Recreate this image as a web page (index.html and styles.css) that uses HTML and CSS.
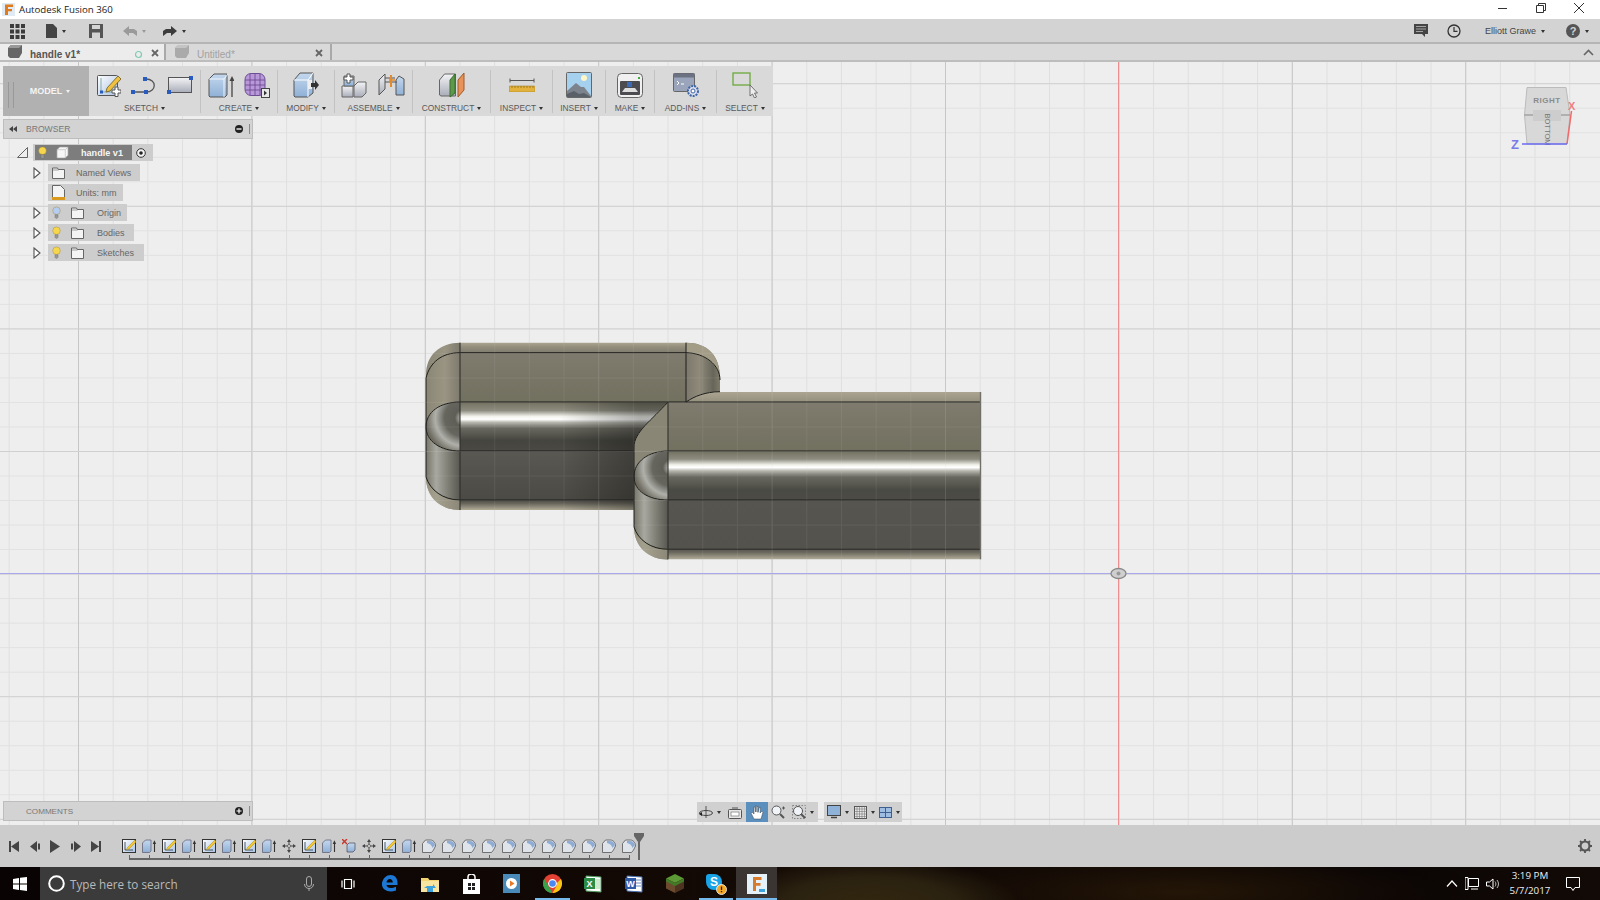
FILE: index.html
```html
<!DOCTYPE html>
<html lang="en">
<head>
<meta charset="utf-8">
<title>Autodesk Fusion 360</title>
<link rel="stylesheet" href="styles.css">
</head>
<body>
<svg class="defs" width="0" height="0" aria-hidden="true">
  <defs>
    <linearGradient id="gBlue" x1="0" y1="0" x2="0" y2="1"><stop offset="0" stop-color="#c4d8ee"/><stop offset="1" stop-color="#8fb0d6"/></linearGradient>
    <linearGradient id="gGrey" x1="0" y1="0" x2="0" y2="1"><stop offset="0" stop-color="#f4f4f6"/><stop offset="1" stop-color="#a9adb8"/></linearGradient>
    <linearGradient id="gPaper" x1="0" y1="0" x2="1" y2="1"><stop offset="0" stop-color="#fff"/><stop offset="1" stop-color="#a9c2e2"/></linearGradient>

    <symbol id="i-sketch" viewBox="0 0 24 24"><rect x=".5" y="2.5" width="20" height="20" rx="1" fill="url(#gPaper)" stroke="#555"/><path d="M4 5v14h14" fill="none" stroke="#8aa" /><rect x="3" y="17.500" width="3" height="3" fill="#2a5cc0"/><path d="M10 15l11-12 3 3-11 12-4 1z" fill="#f0c040" stroke="#6a5a20" stroke-width=".8"/><path d="M15 17h3v-3h3v3h3v3h-3v3.500h-3V20h-3z" fill="#fff" stroke="#555"/></symbol>
    <symbol id="i-spline" viewBox="0 0 26 18"><path d="M2 16h13c11 0 11-13 0-13h-1" fill="none" stroke="#555" stroke-width="1.300"/><rect y="14" width="4" height="4" fill="#2a5cc0"/><rect x="13" y="14" width="4" height="4" fill="#2a5cc0"/><rect x="12" y="1" width="4" height="4" fill="#2a5cc0"/></symbol>
    <symbol id="i-rect" viewBox="0 0 26 18"><rect x="1.500" y="1.500" width="23" height="15" fill="url(#gGrey)" stroke="#555"/><rect x="22" width="4" height="4" fill="#2a5cc0"/><rect y="14" width="4" height="4" fill="#2a5cc0"/></symbol>
    <symbol id="i-extrude" viewBox="0 0 26 26"><path d="M1 7l5-5h13v21l-2 2H2l-1-1z" fill="url(#gBlue)" stroke="#555"/><path d="M1 7h15v18M16 7l4-5" fill="none" stroke="#fff" stroke-opacity=".8"/><path d="M24 25V7" stroke="#444" stroke-width="1.300"/><path d="M21.500 9L24 4l2.500 5z" fill="#444"/></symbol>
    <symbol id="i-mesh" viewBox="0 0 26 26"><rect x="1" y="1.500" width="20" height="22" rx="6" fill="#b898d8" stroke="#6d4d94"/><path d="M1 8h20M1 13h20M1 18h20M6 2v21M11 2v21M16 2v21" stroke="#6d4d94" stroke-width=".9"/><rect x="17.500" y="16.500" width="8" height="9" fill="#e8e8e8" stroke="#444"/><path d="M20 18.500l3 2.500-3 2.500z" fill="#333"/></symbol>
    <symbol id="i-modify" viewBox="0 0 26 26"><path d="M1 8l6-7h13v20l-5 4H2l-1-1z" fill="url(#gBlue)" stroke="#555"/><path d="M15 25V8H1M15 8l5-7" fill="none" stroke="#fff"/><path d="M15 8h4v9h-4z" fill="#eee"/><path d="M18 11h4V8l4 5-4 5v-3h-4z" fill="#333"/></symbol>
    <symbol id="i-assemble" viewBox="0 0 26 26"><path d="M1 14h11v11H1z" fill="url(#gGrey)" stroke="#666"/><path d="M13 14l4-4h8v11l-4 4h-8z" fill="url(#gGrey)" stroke="#666"/><path d="M3 4h10v10H3z" fill="url(#gBlue)" stroke="#666"/><path d="M3 5h3V2h3v3h3v3H9v3H6V8H3z" fill="#fff" stroke="#555"/></symbol>
    <symbol id="i-joint" viewBox="0 0 30 26"><path d="M2 23V8l6-6v15z" fill="url(#gGrey)" stroke="#555"/><path d="M19 23V8l3-4 5 3v16z" fill="url(#gBlue)" stroke="#555"/><path d="M8 6h10M8 10h12" stroke="#555" fill="none"/><path d="M14 3v12" stroke="#e58a2a" stroke-width="2"/><path d="M12 8h6" stroke="#e58a2a" stroke-width="1.500"/></symbol>
    <symbol id="i-construct" viewBox="0 0 26 26"><path d="M.5 8l5-6h11v22H2l-1.500-1z" fill="url(#gGrey)" stroke="#666"/><path d="M11 8l5-6v19l-5 4z" fill="#5c9a4a" stroke="#3d6d30"/><path d="M19 8l6-7v17l-6 7z" fill="#e8925a" stroke="#a05a28"/></symbol>
    <symbol id="i-inspect" viewBox="0 0 26 14"><path d="M1 2.500h24M1 .5v4M25 .5v4" stroke="#555" fill="none"/><rect y="8" width="26" height="6" rx="1" fill="#e2b23c" stroke="#a98322" stroke-width=".6"/><path d="M3 8v2M6 8v2M9 8v2M12 8v2M15 8v2M18 8v2M21 8v2M24 8v2" stroke="#8a6a1a" stroke-width=".7"/></symbol>
    <symbol id="i-insert" viewBox="0 0 26 26"><rect x=".5" y=".5" width="25" height="25" rx="1" fill="#a5d0ee" stroke="#666"/><circle cx="18" cy="6" r="3" fill="#fff6c8"/><path d="M1 25V19l9-8 5 4 3 0 7 9v1z" fill="#7d838c"/><path d="M1 25v-3l7-3 5 3 5-1 7 4z" fill="#596068"/></symbol>
    <symbol id="i-make" viewBox="0 0 26 25"><rect x=".5" y=".5" width="25" height="24" rx="4" fill="#f0f0f0" stroke="#666"/><rect x="3" y="8" width="20" height="14" rx="1" fill="#4c4c50"/><path d="M10 9h5v5h-5z" fill="#3a6ab8"/><path d="M5 19l3-4h10l3 4z" fill="#ddd"/><rect x="21" y="4" width="2" height="2" fill="#4a4"/></symbol>
    <symbol id="i-addins" viewBox="0 0 26 24"><rect x=".5" y=".5" width="21" height="18" rx="1" fill="#9aa5bb" stroke="#666"/><rect x=".5" y=".5" width="21" height="4" fill="#6c7282"/><path d="M4 8l2 2-2 2M8 11h3" stroke="#fff" fill="none"/><circle cx="20" cy="18" r="5" fill="#dde" stroke="#3c66a8" stroke-width="2" stroke-dasharray="2 1"/><circle cx="20" cy="18" r="2" fill="#fff" stroke="#3c66a8"/></symbol>
    <symbol id="i-select" viewBox="0 0 26 26"><rect x="1" y="1" width="17" height="12" fill="none" stroke="#6aa83c" stroke-width="1.300"/><path d="M18 13v11l2.500-2 2 4 2-1-2-4h3z" fill="#eee" stroke="#555" stroke-width=".8"/></symbol>

    <symbol id="t-sketch" viewBox="0 0 14 14"><rect x=".5" y=".5" width="13" height="13" fill="url(#gPaper)" stroke="#333"/><path d="M3 3v8h8" fill="none" stroke="#234" stroke-width=".8"/><path d="M5 9l8-8 1 2-7 7-2.500 1z" fill="#f4c82c" stroke="#9a7a10" stroke-width=".4"/></symbol>
    <symbol id="t-extrude" viewBox="0 0 14 14"><path d="M.5 4l3-3h5.500v11l-1.500 1.500H.5z" fill="url(#gBlue)" stroke="#667" stroke-width=".8"/><path d="M12.500 13V4" stroke="#333" stroke-width="1.100"/><path d="M10.700 5L12.500 1.200 14 5z" fill="#333"/></symbol>
    <symbol id="t-move" viewBox="0 0 14 14"><path d="M7 3v8M3 7h8" stroke="#444"/><path d="M7 0l2 3H5zM7 14l2-3H5zM0 7l3-2v4zM14 7l-3-2v4z" fill="#444"/><circle cx="7" cy="7" r="1.500" fill="#ddd" stroke="#444" stroke-width=".6"/></symbol>
    <symbol id="t-delete" viewBox="0 0 14 14"><path d="M0 0l5 5M5 0L0 5" stroke="#c8352a" stroke-width="1.400"/><path d="M5 6l2-2h6v7l-2 2H5z" fill="url(#gBlue)" stroke="#556" stroke-width=".8"/></symbol>
    <symbol id="t-fillet" viewBox="0 0 14 14"><path d="M.5 4.500l3-3.500h5C11 1 13.500 3.500 13.500 7l-2 4-2 2.500H.5z" fill="#dfe3ea" stroke="#555" stroke-width=".8"/><path d="M5 2h3c2.800 0 4.500 2 5 4l-2.500 3C10 6.500 8 4.500 5 4z" fill="#8fadd4"/></symbol>

    <symbol id="n-bulb" viewBox="0 0 10 14"><circle cx="5" cy="5" r="4.200" fill="currentColor" stroke="#a08a3a" stroke-width=".5"/><path d="M3.300 9.500h3.400v3l-1 1H4.300l-1-1z" fill="#999" stroke="#666" stroke-width=".4"/></symbol>
    <symbol id="n-folder" viewBox="0 0 13 12"><path d="M.5 1h5l.8 1.500h6.200v9H.5z" fill="#f4f4f4" stroke="#666"/><path d="M.5 3h6" stroke="#666" stroke-width=".6"/></symbol>
    <symbol id="n-arrow" viewBox="0 0 8 12"><path d="M1 1l6 5-6 5z" fill="#fff" stroke="#555" stroke-width="1.100"/></symbol>
    <symbol id="n-cube" viewBox="0 0 14 14"><path d="M1 4l3-3h9v9l-3 3H1z" fill="#f6f6f6" stroke="#999" stroke-width=".7"/><path d="M1 4h9v9M10 4l3-3" fill="none" stroke="#bbb" stroke-width=".7"/></symbol>
  </defs>
</svg>

<div class="app">
  <header class="titlebar">
    <svg class="title-logo" width="13" height="13" viewBox="0 0 13 13"><rect width="13" height="13" fill="#dfeaf2"/><path d="M3 1.500h8v2.500H6v2h4v2.300H6V12H3z" fill="#e07a1e"/></svg>
    <span class="title-text">Autodesk Fusion 360</span>
    <div class="winctl">
      <svg width="12" height="12" viewBox="0 0 12 12"><path d="M1 6.500h9" stroke="#333"/></svg>
      <svg width="12" height="12" viewBox="0 0 12 12"><path d="M1.500 3.500h7v7h-7zM3.500 3.500v-2h7v7h-2" fill="none" stroke="#333"/></svg>
      <svg width="12" height="12" viewBox="0 0 12 12"><path d="M1 1l10 10M11 1L1 11" stroke="#333"/></svg>
    </div>
  </header>

  <div class="appbar">
    <svg class="ab-grid" width="15" height="15" viewBox="0 0 15 15"><path d="M0 0h4v4H0zM5.500 0h4v4h-4zM11 0h4v4h-4zM0 5.500h4v4H0zM5.500 5.500h4v4h-4zM11 5.500h4v4h-4zM0 11h4v4H0zM5.500 11h4v4h-4zM11 11h4v4h-4z" fill="#3c3c3c"/></svg>
    <svg class="ab-file" width="11" height="14" viewBox="0 0 11 14"><path d="M0 0h7l4 4v10H0z" fill="#444"/></svg>
    <i class="caret ab-caret"></i>
    <svg class="ab-save" width="14" height="14" viewBox="0 0 14 14"><path d="M0 0h14v14H0z" fill="#555"/><path d="M3 1h8v4H3z" fill="#d3d3d3"/><path d="M3 8.500h8V14H3z" fill="#d3d3d3"/></svg>
    <svg class="ab-undo" width="14" height="11" viewBox="0 0 14 11"><path d="M6 0L0 5l6 5V7h4l4 3V5l-3-2H6z" fill="#9a9a9a"/></svg>
    <i class="caret caret-off ab-caret"></i>
    <svg class="ab-redo" width="14" height="11" viewBox="0 0 14 11"><path d="M8 0l6 5-6 5V7H4l-4 3V5l3-2h5z" fill="#3c3c3c"/></svg>
    <i class="caret ab-caret"></i>
    <div class="ab-right">
      <svg width="14" height="14" viewBox="0 0 14 14"><path d="M0 0h14v10h-3v3l-3-3H0z" fill="#444"/><path d="M2 2.500h10M2 5h10M2 7.500h7" stroke="#bbb" stroke-width=".8"/></svg>
      <svg class="ab-clock" width="14" height="14" viewBox="0 0 14 14"><circle cx="7" cy="7" r="6" fill="none" stroke="#333" stroke-width="1.300"/><path d="M7 3v4.300h3.500" fill="none" stroke="#333" stroke-width="1.200"/></svg>
      <span class="user">Elliott Grawe</span>
      <i class="caret ab-caret"></i>
      <svg class="ab-help" width="14" height="14" viewBox="0 0 14 14"><circle cx="7" cy="7" r="7" fill="#555"/><text x="7" y="10.500" class="help-mark">?</text></svg>
      <i class="caret ab-caret"></i>
    </div>
  </div>

  <nav class="tabs">
    <div class="tab tab-on">
      <svg class="tab-cube" width="14" height="13" viewBox="0 0 14 13"><path d="M0 3l3-3h11v8l-3 5H2l-2-2z" fill="#666"/><path d="M0 3l3-3h11l-3 3z" fill="#999"/></svg>
      <span class="tab-label">handle v1*</span>
      <svg class="tab-ring" width="9" height="9" viewBox="0 0 9 9"><circle cx="4.500" cy="4.500" r="3" fill="none" stroke="#7fcbb4" stroke-width="1.200"/></svg>
      <svg class="tab-x" width="8" height="8" viewBox="0 0 8 8"><path d="M1 1l6 6M7 1L1 7" stroke="#666" stroke-width="1.800"/></svg>
    </div>
    <div class="tab tab-off">
      <svg class="tab-cube" width="14" height="13" viewBox="0 0 14 13"><path d="M0 3l3-3h11v8l-3 5H2l-2-2z" fill="#aaa"/><path d="M0 3l3-3h11l-3 3z" fill="#c4c4c4"/></svg>
      <span class="tab-label">Untitled*</span>
      <svg class="tab-x" width="8" height="8" viewBox="0 0 8 8"><path d="M1 1l6 6M7 1L1 7" stroke="#666" stroke-width="1.800"/></svg>
    </div>
    <svg class="tabs-up" width="11" height="7" viewBox="0 0 11 7"><path d="M1 6l4.500-4.500L10 6" fill="none" stroke="#666" stroke-width="1.600"/></svg>
  </nav>

  <main class="viewport">
    <svg class="scene" viewBox="0 62 1600 763" width="1600" height="763">
      <defs>
        <pattern id="gridMinor" patternUnits="userSpaceOnUse" x="8.640" y="9.640" width="34.680" height="24.520"><rect width="1" height="24.520" fill="#dfdfdf"/><rect width="34.680" height="1" fill="#e1e1e1"/></pattern>
        <pattern id="gridMajor" patternUnits="userSpaceOnUse" x="78" y="83.200" width="173.400" height="122.600"><rect width="1" height="122.600" fill="#c6c6c6"/><rect width="173.400" height="1" fill="#d0d0d0"/></pattern>
        <linearGradient id="mLeft" gradientUnits="userSpaceOnUse" x1="0" y1="342.700" x2="0" y2="510">
          <stop offset="0" stop-color="#aaa490"/><stop offset=".026" stop-color="#928d7c"/><stop offset=".06" stop-color="#7f7b6e"/>
          <stop offset=".354" stop-color="#72705f"/><stop offset=".405" stop-color="#8d8c80"/><stop offset=".44" stop-color="#f2f2ec"/><stop offset=".458" stop-color="#ffffff"/>
          <stop offset=".476" stop-color="#b8b8b0"/><stop offset=".51" stop-color="#6a6960"/><stop offset=".585" stop-color="#45453f"/>
          <stop offset=".645" stop-color="#4a4943"/><stop offset=".651" stop-color="#595852"/><stop offset=".94" stop-color="#4b4a44"/><stop offset=".96" stop-color="#66645a"/><stop offset="1" stop-color="#b2ac98"/>
        </linearGradient>
        <linearGradient id="mRight" gradientUnits="userSpaceOnUse" x1="0" y1="392.300" x2="0" y2="559.300">
          <stop offset="0" stop-color="#aaa490"/><stop offset=".055" stop-color="#96917f"/><stop offset=".06" stop-color="#7f7b6e"/>
          <stop offset=".351" stop-color="#72705f"/><stop offset=".4" stop-color="#8d8c80"/><stop offset=".435" stop-color="#f2f2ec"/><stop offset=".45" stop-color="#ffffff"/>
          <stop offset=".47" stop-color="#b8b8b0"/><stop offset=".505" stop-color="#6a6960"/><stop offset=".585" stop-color="#4a4a44"/>
          <stop offset=".642" stop-color="#4c4b45"/><stop offset=".65" stop-color="#565550"/><stop offset=".938" stop-color="#53524c"/><stop offset=".96" stop-color="#6d6b60"/><stop offset="1" stop-color="#b2ac98"/>
        </linearGradient>
        <linearGradient id="mEnd" gradientUnits="userSpaceOnUse" x1="426" y1="0" x2="460" y2="0">
          <stop offset="0" stop-color="#77756a"/><stop offset=".3" stop-color="#a8a8a0"/><stop offset=".6" stop-color="#86857c"/><stop offset="1" stop-color="#585750"/>
        </linearGradient>
        <linearGradient id="mEndTop" gradientUnits="userSpaceOnUse" x1="426" y1="0" x2="460" y2="0">
          <stop offset="0" stop-color="#8a8675"/><stop offset=".55" stop-color="#9a9583"/><stop offset="1" stop-color="#7e7a6d"/>
        </linearGradient>
        <linearGradient id="mCorner" gradientUnits="userSpaceOnUse" x1="686" y1="0" x2="720" y2="0">
          <stop offset="0" stop-color="#7c786c"/><stop offset=".4" stop-color="#8f8a7a"/><stop offset=".8" stop-color="#67655a"/><stop offset="1" stop-color="#7f7b6a"/>
        </linearGradient>
        <linearGradient id="mShade" gradientUnits="userSpaceOnUse" x1="560" y1="0" x2="640" y2="0">
          <stop offset="0" stop-color="#000" stop-opacity="0"/><stop offset="1" stop-color="#000" stop-opacity=".3"/>
        </linearGradient>
        <radialGradient id="mBall" gradientUnits="userSpaceOnUse" cx="463" cy="418" r="37">
          <stop offset="0" stop-color="#d8d8d0"/><stop offset=".22" stop-color="#5e5d56"/><stop offset=".5" stop-color="#66665f"/><stop offset=".75" stop-color="#b0b0aa"/><stop offset="1" stop-color="#6d6b60"/>
        </radialGradient>
        <g id="endCap">
          <path d="M426 426.700C426 441 440 451 460 451V402C440 402 426 412 426 426.700z" fill="url(#mBall)"/>
          <path d="M426 426.700V477C426 497 440 510 460 510V451C440 451 426 441 426 426.700z" fill="url(#mEnd)"/>
          <path d="M460 510C440 510 426 497 426 477 430 490 443 500 460 500z" fill="#a39d88" opacity=".7"/>
        </g>
      </defs>
      <rect x="0" y="62" width="1600" height="763" fill="#eeeeee"/>
      <rect x="0" y="62" width="1600" height="763" fill="url(#gridMinor)"/>
      <rect x="0" y="62" width="1600" height="763" fill="url(#gridMajor)"/>
      <path d="M1118.500 62v763" class="axis-red"/>
      <path d="M0 573.500h1600" class="axis-blue"/>

      <path d="M460 342.700H686V402H668C652 420 634 432 634 447V510H460z" fill="url(#mLeft)"/>
      <path d="M560 402H668C652 420 634 432 634 447V510H560z" fill="url(#mShade)"/>
      <path d="M686 342.700C708 342.700 720 356 720 378V391.700C705 391.700 695 396 686 402z" fill="url(#mCorner)"/>
      <path d="M686 342.700C708 342.700 720 356 720 378 718 365 705 353 686 352.700z" fill="#a39d88"/>
      <path d="M460 342.700C440 342.700 426 355 426 375V426.700C426 412 440 402 460 402z" fill="url(#mEndTop)"/>
      <use href="#endCap"/>
      <path d="M668 402H686C695 396 705 392 720 392H980.500V559.300H668z" fill="url(#mRight)"/>
      <path d="M668 402C652 420 634 432 634 447V476.300C634 462 648 451 668 451z" fill="#8a8675"/>
      <use href="#endCap" transform="translate(208 49.600)"/>

      <g class="edges">
        <path d="M460 342.700V510M460 352.700H686M686 342.700V402M460 402H668M460 451H634M460 500H634"/>
        <path d="M426 477V378C430 362 442 352.700 460 352.700M426 426.700C426 412 440 402 460 402M426 426.700C426 441 440 451 460 451M426 477C430 490 443 500 460 500"/>
        <path d="M686 352.700C705 353 720 365 720 380M686 402C695 396 705 392 720 391.700"/>
        <path d="M668 402C652 420 634 432 634 447V527C638 540 651 549.300 668 549.300M668 402V559.300M668 402H980M668 451H980M668 500H980M668 549.300H980"/>
        <path d="M634 476.300C634 462 648 451 668 451M634 476.300C634 491 648 500 668 500"/>
      </g>
      <path d="M980.500 392V559.300" class="edge-end"/>
      <rect x="420" y="340" width="566" height="224" fill="url(#gridMinor)" opacity=".08"/>
      <rect x="420" y="340" width="566" height="224" fill="url(#gridMajor)" opacity=".08"/>

      <g class="origin">
        <ellipse cx="1118.500" cy="573.500" rx="7.500" ry="5" fill="#cfcfcf" stroke="#888" stroke-width="1.300"/>
        <circle cx="1118.500" cy="573.500" r="2" fill="#999"/>
      </g>

      <g class="cube">
        <path d="M1527 87.500H1566L1570 115 1567 144H1527L1524.500 115z" fill="#d8d8d8" stroke="#bbb"/>
        <path d="M1524.500 115H1570" stroke="#888"/>
        <rect x="1533" y="110" width="28" height="11" fill="#cdcdcd"/>
        <text x="1547" y="103" class="cube-right">RIGHT</text>
        <text x="1547" y="129.500" class="cube-bottom" transform="rotate(90 1547 129.500)">BOTTOM</text>
        <path d="M1571.500 111L1567 144" class="cube-x"/>
        <path d="M1522 144H1567" class="cube-z"/>
        <text x="1568" y="110" class="cube-lx">X</text>
        <text x="1511" y="149" class="cube-lz">Z</text>
      </g>
    </svg>

    <section class="toolbar">
      <div class="tb-model"><span>MODEL</span><i class="caret caret-light"></i></div>
      <div class="tb-sec sec-sketch"><div class="tb-icons"><svg class="ic" width="24" height="24"><use href="#i-sketch"/></svg><svg class="ic" width="26" height="18"><use href="#i-spline"/></svg><svg class="ic" width="26" height="18"><use href="#i-rect"/></svg></div><div class="tb-label">SKETCH<i class="caret"></i></div></div>
      <div class="tb-sec sec-create"><div class="tb-icons"><svg class="ic" width="26" height="26"><use href="#i-extrude"/></svg><svg class="ic" width="26" height="26"><use href="#i-mesh"/></svg></div><div class="tb-label">CREATE<i class="caret"></i></div></div>
      <div class="tb-sec sec-modify"><div class="tb-icons"><svg class="ic" width="26" height="26"><use href="#i-modify"/></svg></div><div class="tb-label">MODIFY<i class="caret"></i></div></div>
      <div class="tb-sec sec-assemble"><div class="tb-icons"><svg class="ic" width="26" height="26"><use href="#i-assemble"/></svg><svg class="ic" width="30" height="26"><use href="#i-joint"/></svg></div><div class="tb-label">ASSEMBLE<i class="caret"></i></div></div>
      <div class="tb-sec sec-construct"><div class="tb-icons"><svg class="ic" width="26" height="26"><use href="#i-construct"/></svg></div><div class="tb-label">CONSTRUCT<i class="caret"></i></div></div>
      <div class="tb-sec sec-inspect"><div class="tb-icons"><svg class="ic" width="26" height="14"><use href="#i-inspect"/></svg></div><div class="tb-label">INSPECT<i class="caret"></i></div></div>
      <div class="tb-sec sec-insert"><div class="tb-icons"><svg class="ic" width="26" height="26"><use href="#i-insert"/></svg></div><div class="tb-label">INSERT<i class="caret"></i></div></div>
      <div class="tb-sec sec-make"><div class="tb-icons"><svg class="ic" width="26" height="25"><use href="#i-make"/></svg></div><div class="tb-label">MAKE<i class="caret"></i></div></div>
      <div class="tb-sec sec-addins"><div class="tb-icons"><svg class="ic" width="26" height="24"><use href="#i-addins"/></svg></div><div class="tb-label">ADD-INS<i class="caret"></i></div></div>
      <div class="tb-sec sec-select"><div class="tb-icons"><svg class="ic" width="26" height="26"><use href="#i-select"/></svg></div><div class="tb-label">SELECT<i class="caret"></i></div></div>
    </section>

    <aside class="browser">
      <div class="panel-head">
        <svg class="panel-back" width="8" height="6" viewBox="0 0 8 6"><path d="M4 0v6L0 3zM8 0v6L4 3z" fill="#444"/></svg>
        <span class="panel-title">BROWSER</span>
        <svg class="panel-btn" width="8" height="8" viewBox="0 0 8 8"><circle cx="4" cy="4" r="4" fill="#222"/><path d="M1.500 4h5" stroke="#fff" stroke-width="1.300"/></svg>
        <i class="panel-grip"></i>
      </div>
      <ul class="tree">
        <li class="row row-root">
          <svg class="root-arrow" width="11" height="11" viewBox="0 0 11 11"><path d="M.5 10.500L10.500.5v10z" fill="#eee" stroke="#555" stroke-width=".9"/></svg>
          <div class="pill-root">
            <div class="pill-dark"><svg class="bulb bulb-on" width="9" height="13"><use href="#n-bulb"/></svg><svg class="cube-ic" width="13" height="13"><use href="#n-cube"/></svg><span class="root-label">handle v1</span></div>
            <svg class="radio" width="10" height="10" viewBox="0 0 10 10"><circle cx="5" cy="5" r="4.300" fill="#f4f4f4" stroke="#333"/><circle cx="5" cy="5" r="1.800" fill="#222"/></svg>
          </div>
        </li>
        <li class="row"><svg class="arrow" width="8" height="12"><use href="#n-arrow"/></svg><div class="pill pill-named"><svg class="folder" width="13" height="12"><use href="#n-folder"/></svg><span class="pill-text text-named">Named Views</span></div></li>
        <li class="row"><span class="arrow-gap"></span><div class="pill pill-units"><svg class="folder" width="13" height="15" viewBox="0 0 13 15"><path d="M.5.500h8l4 4v8h-12z" fill="#f4f4f4" stroke="#666"/><rect y="12" width="13" height="3" fill="#d99a1e"/></svg><span class="pill-text text-named">Units: mm</span></div></li>
        <li class="row"><svg class="arrow" width="8" height="12"><use href="#n-arrow"/></svg><div class="pill pill-origin"><svg class="bulb bulb-off" width="9" height="13"><use href="#n-bulb"/></svg><svg class="folder folder-b" width="13" height="12"><use href="#n-folder"/></svg><span class="pill-text">Origin</span></div></li>
        <li class="row"><svg class="arrow" width="8" height="12"><use href="#n-arrow"/></svg><div class="pill pill-bodies"><svg class="bulb bulb-on" width="9" height="13"><use href="#n-bulb"/></svg><svg class="folder folder-b" width="13" height="12"><use href="#n-folder"/></svg><span class="pill-text">Bodies</span></div></li>
        <li class="row"><svg class="arrow" width="8" height="12"><use href="#n-arrow"/></svg><div class="pill pill-sketches"><svg class="bulb bulb-on" width="9" height="13"><use href="#n-bulb"/></svg><svg class="folder folder-b" width="13" height="12"><use href="#n-folder"/></svg><span class="pill-text">Sketches</span></div></li>
      </ul>
    </aside>

    <aside class="comments panel-head">
      <span class="panel-title">COMMENTS</span>
      <svg class="panel-btn" width="8" height="8" viewBox="0 0 8 8"><circle cx="4" cy="4" r="4" fill="#222"/><path d="M1.500 4h5M4 1.500v5" stroke="#fff" stroke-width="1.200"/></svg>
      <i class="panel-grip"></i>
    </aside>

    <div class="navbar">
      <div class="nav-group">
        <div class="nav-item nav-orbit"><svg width="14" height="14" viewBox="0 0 14 14"><path d="M7 1v12" stroke="#555"/><ellipse cx="7" cy="8" rx="6.500" ry="2.500" fill="none" stroke="#444"/><path d="M0 9l3-2v4z" fill="#222"/></svg><i class="caret"></i></div>
        <div class="nav-item nav-look"><svg width="14" height="13" viewBox="0 0 14 13"><rect x=".5" y="3.500" width="13" height="9" rx="1" fill="#e6e6e6" stroke="#555"/><rect x="3" y="6" width="8" height="4" fill="#fff" stroke="#777" stroke-width=".7"/><path d="M4 2h6" stroke="#555"/></svg></div>
        <div class="nav-item nav-on nav-hand"><svg width="14" height="15" viewBox="0 0 14 15"><path d="M4 14L1 8l1-1 2 2V2l1.200 0 .3 5V1h1.300l.2 6V1.500h1.300L8 7.500 9.300 2.500h1.200L10 8l2-2 1 1-2 7z" fill="#fff" stroke="#345" stroke-width=".5"/></svg></div>
        <div class="nav-item nav-zoom"><svg width="15" height="14" viewBox="0 0 15 14"><circle cx="5.500" cy="5.500" r="4.500" fill="#f0f4f8" stroke="#555"/><path d="M9 9l4 4" stroke="#555" stroke-width="2"/><path d="M11 3h3M12.500 1.500v3" stroke="#555"/></svg></div>
        <div class="nav-item nav-fit"><svg width="14" height="14" viewBox="0 0 14 14"><rect x=".5" y=".5" width="13" height="13" fill="none" stroke="#888" stroke-dasharray="1.500 1.500"/><circle cx="6" cy="6" r="4.500" fill="#f0f4f8" stroke="#555"/><path d="M9 9l4 4" stroke="#555" stroke-width="2"/></svg><i class="caret"></i></div>
      </div>
      <div class="nav-group">
        <div class="nav-item nav-disp"><svg width="14" height="14" viewBox="0 0 14 14"><rect x=".5" y=".5" width="13" height="10" fill="#8fb2d8" stroke="#444"/><path d="M4 12.500h6" stroke="#444" stroke-width="1.500"/></svg><i class="caret"></i></div>
        <div class="nav-item nav-gridm"><svg width="13" height="13" viewBox="0 0 13 13"><rect x=".5" y=".5" width="12" height="12" fill="#e8e8e8" stroke="#555"/><path d="M3 .5v12M5.500 .5v12M8 .5v12M10.500 .5v12M.5 3h12M.5 5.500h12M.5 8h12M.5 10.500h12" stroke="#777" stroke-width=".6"/></svg><i class="caret"></i></div>
        <div class="nav-item nav-views"><svg width="13" height="11" viewBox="0 0 13 11"><rect x=".5" y=".5" width="12" height="10" fill="#9fbde0" stroke="#3e5f90"/><path d="M6.500 .5v10M.5 5.500h12" stroke="#3e5f90"/></svg><i class="caret"></i></div>
      </div>
    </div>
  </main>

  <footer class="timeline">
    <div class="play">
      <svg width="10" height="11" viewBox="0 0 10 11"><path d="M0 0h2v11H0zM10 0v11L2 5.500z" fill="#444"/></svg>
      <svg width="10" height="11" viewBox="0 0 10 11"><path d="M7 0v11L0 5.500zM8 2.500h2v6H8z" fill="#444"/></svg>
      <svg width="10" height="13" viewBox="0 0 10 13"><path d="M0 0l10 6.500L0 13z" fill="#444"/></svg>
      <svg width="10" height="11" viewBox="0 0 10 11"><path d="M3 0v11l7-5.500zM0 2.500h2v6H0z" fill="#444"/></svg>
      <svg width="10" height="11" viewBox="0 0 10 11"><path d="M0 0v11l8-5.500zM8 0h2v11H8z" fill="#444"/></svg>
    </div>
    <div class="steps">
      <div class="step"><svg width="14" height="14"><use href="#t-sketch"/></svg></div>
      <div class="step"><svg width="14" height="14"><use href="#t-extrude"/></svg></div>
      <div class="step"><svg width="14" height="14"><use href="#t-sketch"/></svg></div>
      <div class="step"><svg width="14" height="14"><use href="#t-extrude"/></svg></div>
      <div class="step"><svg width="14" height="14"><use href="#t-sketch"/></svg></div>
      <div class="step"><svg width="14" height="14"><use href="#t-extrude"/></svg></div>
      <div class="step"><svg width="14" height="14"><use href="#t-sketch"/></svg></div>
      <div class="step"><svg width="14" height="14"><use href="#t-extrude"/></svg></div>
      <div class="step"><svg width="14" height="14"><use href="#t-move"/></svg></div>
      <div class="step"><svg width="14" height="14"><use href="#t-sketch"/></svg></div>
      <div class="step"><svg width="14" height="14"><use href="#t-extrude"/></svg></div>
      <div class="step"><svg width="14" height="14"><use href="#t-delete"/></svg></div>
      <div class="step"><svg width="14" height="14"><use href="#t-move"/></svg></div>
      <div class="step"><svg width="14" height="14"><use href="#t-sketch"/></svg></div>
      <div class="step"><svg width="14" height="14"><use href="#t-extrude"/></svg></div>
      <div class="step"><svg width="14" height="14"><use href="#t-fillet"/></svg></div>
      <div class="step"><svg width="14" height="14"><use href="#t-fillet"/></svg></div>
      <div class="step"><svg width="14" height="14"><use href="#t-fillet"/></svg></div>
      <div class="step"><svg width="14" height="14"><use href="#t-fillet"/></svg></div>
      <div class="step"><svg width="14" height="14"><use href="#t-fillet"/></svg></div>
      <div class="step"><svg width="14" height="14"><use href="#t-fillet"/></svg></div>
      <div class="step"><svg width="14" height="14"><use href="#t-fillet"/></svg></div>
      <div class="step"><svg width="14" height="14"><use href="#t-fillet"/></svg></div>
      <div class="step"><svg width="14" height="14"><use href="#t-fillet"/></svg></div>
      <div class="step"><svg width="14" height="14"><use href="#t-fillet"/></svg></div>
      <div class="step"><svg width="14" height="14"><use href="#t-fillet"/></svg></div>
      <svg class="marker" width="10" height="27" viewBox="0 0 10 27"><path d="M0 0h10v3L6 9v18H4V9L0 3z" fill="#666"/></svg>
    </div>
    <svg class="gear" width="14" height="14" viewBox="0 0 14 14"><circle cx="7" cy="7" r="4.500" fill="none" stroke="#555" stroke-width="2.200"/><path d="M7 0v3M7 11v3M0 7h3M11 7h3M2 2l2 2M10 10l2 2M12 2l-2 2M4 10l-2 2" stroke="#555" stroke-width="1.800"/></svg>
  </footer>

  <div class="taskbar">
    <div class="tk-start"><svg width="14" height="14" viewBox="0 0 14 14"><path d="M0 2l6-1v5.500H0zM7 .8L14 0v6.500H7zM0 7.500h6V13l-6-1zM7 7.500h7V14l-7-1z" fill="#fff"/></svg></div>
    <div class="tk-search">
      <svg width="17" height="17" viewBox="0 0 17 17"><circle cx="8.500" cy="8.500" r="7.300" fill="none" stroke="#fff" stroke-width="2"/></svg>
      <span class="search-text">Type here to search</span>
      <svg class="mic" width="10" height="15" viewBox="0 0 10 15"><rect x="2.500" y=".5" width="5" height="10" rx="2.500" fill="none" stroke="#aaa"/><path d="M.5 8c0 6 9 6 9 0M5 12v3" fill="none" stroke="#aaa"/></svg>
    </div>
    <div class="tk-app tk-first"><svg width="14" height="12" viewBox="0 0 14 12"><path d="M3.500 1.500h7v9h-7zM1 2.500v7M13 2.500v7" fill="none" stroke="#fff" stroke-width="1.200"/></svg></div>
    <div class="tk-app"><svg width="17" height="17" viewBox="0 0 17 17"><path d="M1 8C2 3 5.500 0 9.500 0c4.500 0 7 3 7 8v2H5.500c.4 3 4.500 4 9.500 1.700v3.800C8 18 .2 15.500 1 8zm4.500-.6h6.300c0-2-1.300-3.400-3-3.400S5.800 5.400 5.500 7.400z" fill="#1c78d4"/></svg></div>
    <div class="tk-app"><svg width="18" height="16" viewBox="0 0 18 16"><path d="M0 2h7l1.500 2H18v12H0z" fill="#f2d372"/><path d="M0 5h18v11H0z" fill="#f7e4a0"/><path d="M6 10h6v-2l3 4H3l3-2z" fill="#3ea2dd"/><rect x="6" y="11" width="6" height="5" fill="#3ea2dd"/></svg></div>
    <div class="tk-app"><svg width="17" height="20" viewBox="0 0 17 20"><path d="M0 5h17v15H0z" fill="#fff"/><path d="M5 5V3a3.500 3 0 0 1 7 0v2" fill="none" stroke="#fff" stroke-width="1.500"/><path d="M5 9h3v3H5zM9 9h3v3H9zM5 13h3v3H5zM9 13h3v3H9z" fill="#222"/></svg></div>
    <div class="tk-app"><svg width="17" height="19" viewBox="0 0 17 19"><rect width="17" height="19" fill="#4a8ab8"/><circle cx="8.500" cy="9.500" r="5.500" fill="#fff"/><path d="M7 6.500l4.500 3-4.500 3z" fill="#e8792a"/></svg></div>
    <div class="tk-app tk-open"><svg width="19" height="19" viewBox="0 0 19 19"><circle cx="9.500" cy="9.500" r="9.500" fill="#e34133"/><path d="M9.500 19a9.500 9.500 0 0 1-8.300-14l4.300 7.200 4 6.800z" fill="#38a34b"/><path d="M9.500 19l4.200-7.300-.2-2.200L17.900 5a9.500 9.500 0 0 1-8.400 14z" fill="#fbc514"/><circle cx="9.500" cy="9.500" r="4.400" fill="#fff"/><circle cx="9.500" cy="9.500" r="3.300" fill="#4b89f0"/></svg></div>
    <div class="tk-app"><svg width="19" height="18" viewBox="0 0 19 18"><path d="M2 1l15 1v15L2 16z" fill="#fff" stroke="#4e9a5c"/><path d="M10 4h6v10h-6z" fill="#cfe8d0"/><path d="M0 3h11v11H0z" fill="#2b8a45"/><text x="5.500" y="12" class="app-letter">X</text></svg></div>
    <div class="tk-app"><svg width="19" height="18" viewBox="0 0 19 18"><path d="M2 1l15 1v15L2 16z" fill="#fff" stroke="#4a6fb0"/><path d="M10 5h6M10 8h6M10 11h6" stroke="#6e8cc0"/><path d="M0 3h11v11H0z" fill="#2f5aa8"/><text x="5.500" y="12" class="app-letter">W</text></svg></div>
    <div class="tk-app"><svg width="18" height="19" viewBox="0 0 18 19"><path d="M9 0l9 4.500L9 9 0 4.500z" fill="#5b9a35"/><path d="M0 4.500L9 9v10L0 14.500z" fill="#6b4a2e"/><path d="M18 4.500L9 9v10l9-4.500z" fill="#4e3420"/><path d="M0 4.500L9 9v3L0 7.500zM18 4.500L9 9v3l9-4.500z" fill="#437a27"/></svg></div>
    <div class="tk-app tk-open tk-skype"><svg width="22" height="22" viewBox="0 0 22 22"><circle cx="9" cy="9" r="8" fill="#1aa4e8"/><rect x="1" y="1" width="8" height="8" rx="3" fill="#1aa4e8"/><rect x="9" y="9" width="8" height="8" rx="3" fill="#1aa4e8"/><text x="9" y="13" class="skype-letter">S</text><circle cx="16.500" cy="16.500" r="5" fill="#f5a623" stroke="#fff" stroke-width=".8"/><path d="M16.500 13.500v3.500M16.500 18v1.200" stroke="#222" stroke-width="1.300"/></svg></div>
    <div class="tk-app tk-open tk-active"><svg width="20" height="20" viewBox="0 0 20 20"><rect width="20" height="20" fill="#e4f1f8"/><path d="M6 3h8.500v3H9v3h4.500v2.800H9V17H6z" fill="#d77a2c"/><rect x="12" y="15" width="6" height="3" fill="#3ea2dd"/></svg></div>
    <div class="tray">
      <svg width="12" height="7" viewBox="0 0 12 7"><path d="M1 6.500L6 1l5 5.500" fill="none" stroke="#fff" stroke-width="1.200"/></svg>
      <svg width="14" height="13" viewBox="0 0 14 13"><path d="M3.500 1.500h10v8h-10zM6 12h7M0 .5h3v12H0z" fill="none" stroke="#fff"/></svg>
      <svg width="14" height="12" viewBox="0 0 14 12"><path d="M.5 4h3l3.500-3v10L3.500 8h-3z" fill="none" stroke="#fff"/><path d="M9 3.500c1.200 1.500 1.200 3.500 0 5M11 2c2 2.500 2 5.500 0 8" fill="none" stroke="#bbb"/></svg>
      <div class="clock"><span>3:19 PM</span><span>5/7/2017</span></div>
      <svg class="notif" width="14" height="14" viewBox="0 0 14 14"><path d="M.5 .5h13v10H9l-2 3-2-3H.5z" fill="none" stroke="#fff"/></svg>
    </div>
  </div>
</div>
</body>
</html>
```

FILE: styles.css
```css
* { box-sizing: border-box; }
html, body { margin: 0; padding: 0; height: 100%; overflow: hidden; }
body { font-family: "Liberation Sans", Arial, sans-serif; background: #eee; }
.defs { position: absolute; }
svg { display: block; flex: none; }
ul { list-style: none; margin: 0; padding: 0; }
.app { display: flex; flex-direction: column; width: 1600px; height: 900px; }

.caret { display: inline-block; width: 0; height: 0; flex: none; border-left: 2.5px solid transparent; border-right: 2.5px solid transparent; border-top: 3px solid #333; }
.caret-off { border-top-color: #999; }
.caret-light { border-top-color: #f2f2f2; }

.titlebar { height: 19px; flex: none; display: flex; align-items: center; background: #fff; padding-left: 2px; }
.title-text { margin-left: 4px; font-size: 9.7px; color: #222; font-family: "Open Sans", sans-serif; }
.winctl { margin-left: auto; margin-bottom: 3px; display: flex; gap: 26px; padding-right: 15px; }

.appbar { height: 25px; flex: none; display: flex; align-items: center; background: #d3d3d3; border-bottom: 2px solid #b5b5b5; padding: 1px 0 0 10px; }
.ab-file { margin-left: 21px; }
.ab-caret { margin-left: 5px; }
.ab-save { margin-left: 23px; }
.ab-undo { margin-left: 20px; }
.ab-redo { margin-left: 17px; }
.ab-right { margin-left: auto; display: flex; align-items: center; padding-right: 11px; }
.ab-clock { margin-left: 19px; }
.user { margin-left: 24px; font-size: 9px; color: #444; }
.ab-help { margin-left: 21px; }
.help-mark { font: bold 11px "Liberation Sans", sans-serif; fill: #d3d3d3; text-anchor: middle; }

.tabs { height: 18px; flex: none; display: flex; align-items: stretch; background: #d9d9d9; border-bottom: 2px solid #bdbdbd; position: relative; }
.tab { display: flex; align-items: center; padding: 4px 0 0 8px; border-right: 2px solid #a9a9a9; }
.tab-on { width: 166px; background: #ececec; }
.tab-off { width: 166px; background: #d9d9d9; padding-left: 9px; }
.tab-cube { margin-top: -6px; }
.tab-label { margin-left: 8px; font-size: 10px; }
.tab-on .tab-label { font-weight: bold; color: #555; }
.tab-off .tab-label { color: #a2a2a2; }
.tab-ring { margin-left: auto; }
.tab-on .tab-x { margin-left: 8px; margin-right: 5px; margin-top: -2px; }
.tab-off .tab-x { margin-left: auto; margin-right: 7px; margin-top: -2px; }
.tabs-up { margin: auto 6px auto auto; }

.viewport { position: relative; flex: 1; min-height: 0; background: #eee; overflow: hidden; }
.scene { position: absolute; inset: 0; }
.axis-red { stroke: #ee8e8e; stroke-width: 1; fill: none; }
.axis-blue { stroke: #a8a8ea; stroke-width: 1; fill: none; }
.edges path { fill: none; stroke: #1d1d1a; stroke-width: 1; }
.edge-end { stroke: #6a6a62; stroke-width: 1.400; fill: none; }
.cube-right { font: bold 8px "Liberation Sans", sans-serif; fill: #8a8a8a; text-anchor: middle; letter-spacing: .5px; }
.cube-bottom { font: 7.500px "Liberation Sans", sans-serif; fill: #777; text-anchor: middle; dominant-baseline: middle; }
.cube-x { stroke: #f26a6a; stroke-width: 1.500; fill: none; }
.cube-z { stroke: #6a6af0; stroke-width: 1.500; fill: none; }
.cube-lx { font: bold 11px "Liberation Sans", sans-serif; fill: #f08080; }
.cube-lz { font: bold 13px "Liberation Sans", sans-serif; fill: #7a7ae8; }

.toolbar { position: absolute; left: 3px; top: 4px; width: 770px; height: 50px; display: flex; background: #d9d9d9; }
.tb-model { width: 86px; flex: none; display: flex; align-items: center; justify-content: center; gap: 4px; padding-left: 8px; background: #b1b1b1; color: #f4f4f4; font-size: 9px; font-weight: bold; position: relative; }
.tb-model::before { content: ""; position: absolute; left: 5px; top: 16px; bottom: 8px; width: 4px; border-left: 1px solid #999; border-right: 1px solid #999; }
.tb-sec { flex: none; display: flex; flex-direction: column; align-items: center; margin: 4px 0 3px; padding-top: 2px; border-left: 1px solid #c2c2c2; }
.sec-sketch { width: 111px; border-left: 0; }
.sec-create { width: 77px; }
.sec-modify { width: 57px; }
.sec-assemble { width: 78px; }
.sec-construct { width: 78px; }
.sec-inspect { width: 62px; }
.sec-insert { width: 53px; }
.sec-make { width: 49px; }
.sec-addins { width: 62px; }
.sec-select { width: 57px; }
.tb-icons { height: 26px; display: flex; align-items: center; justify-content: center; gap: 10px; }
.tb-label { margin-top: 5px; display: flex; align-items: center; gap: 3px; font-size: 8.400px; line-height: 10px; color: #585858; white-space: nowrap; }

.browser { position: absolute; left: 3px; top: 57px; width: 250px; }
.panel-head { height: 20px; display: flex; align-items: center; background: #d3d3d3; border: 1px solid #bdbdbd; }
.panel-back { margin-left: 5px; }
.panel-title { font-size: 8.600px; color: #777; margin-left: 9px; }
.panel-btn { margin-left: auto; }
.panel-grip { width: 1px; height: 10px; margin: 0 2px 0 6px; background: #8a8a8a; }
.tree { margin-top: 5px; display: flex; flex-direction: column; gap: 3px; }
.row { display: flex; align-items: center; height: 17px; padding-left: 30px; }
.row-root { padding-left: 14px; }
.arrow { margin-right: 7px; }
.arrow-gap { width: 15px; flex: none; }
.root-arrow { margin-right: 5px; }
.pill-root { display: flex; align-items: center; width: 120px; height: 17px; padding: 1px 2px; background: #cdcdcd; }
.pill-dark { display: flex; align-items: center; width: 97px; height: 15px; background: #7d7d7d; padding-left: 3px; }
.cube-ic { margin-left: 9px; }
.root-label { margin-left: 12px; font-size: 9.100px; font-weight: bold; color: #f6f6f6; }
.radio { margin-left: 4px; }
.bulb-on { color: #f6d64c; }
.bulb-off { color: #b4cdf0; }
.pill { display: flex; align-items: center; height: 17px; background: #cdcdcd; padding-left: 4px; }
.pill-named { width: 92px; }
.pill-units { width: 75px; }
.pill-origin { width: 79px; }
.pill-bodies { width: 86px; }
.pill-sketches { width: 96px; }
.folder-b { margin-left: 10px; }
.pill-text { margin-left: 13px; font-size: 9px; color: #666; }
.text-named { margin-left: 11px; }

.comments { position: absolute; left: 3px; top: 739px; width: 250px; }
.comments .panel-title { margin-left: 22px; font-size: 8.100px; }

.navbar { position: absolute; left: 697px; top: 740px; display: flex; gap: 6px; }
.nav-group { height: 20px; display: flex; align-items: stretch; background: #d0d0d0; }
.nav-item { display: flex; align-items: center; justify-content: center; gap: 4px; }
.nav-orbit { width: 26px; }
.nav-look { width: 23px; }
.nav-hand { width: 22px; }
.nav-zoom { width: 20px; }
.nav-fit { width: 30px; }
.nav-disp { width: 27px; }
.nav-gridm { width: 26px; }
.nav-views { width: 25px; }
.nav-on { background: #5b8fbd; }

.timeline { height: 42px; flex: none; display: flex; align-items: flex-start; background: #cccccc; position: relative; }
.play { display: flex; align-items: center; gap: 10.500px; height: 14px; margin: 14px 0 0 9px; }
.steps { position: relative; display: flex; margin: 14px 0 0 18px; height: 21px; }
.steps::after { content: ""; position: absolute; left: 10px; right: 10px; bottom: 0; height: 2px; background: #666; }
.step { width: 20px; display: flex; justify-content: center; position: relative; flex: none; }
.step::after { content: ""; position: absolute; left: 10px; bottom: 0; width: 1px; height: 5px; background: #666; }
.marker { position: absolute; left: 515px; top: -6px; }
.gear { margin: 14px 8px 0 auto; }

.taskbar { height: 33px; flex: none; display: flex; align-items: stretch; background: radial-gradient(ellipse 150px 50px at 870px 40px, #33280f 0, #2a2110 60%, transparent 100%), radial-gradient(ellipse 260px 40px at 1180px 25px, #241607 0, transparent 100%), linear-gradient(90deg, #090303, #140a05 50%, #090404 85%, #120a06); }
.tk-start { width: 40px; flex: none; display: flex; align-items: center; justify-content: center; background: #0a0303; }
.tk-search { width: 287px; flex: none; display: flex; align-items: center; background: #3b3b3b; padding-left: 8px; }
.search-text { margin-left: 5px; font-family: "Open Sans", sans-serif; font-size: 11.700px; color: #b9b9b9; }
.mic { margin-left: auto; margin-right: 13px; }
.tk-app { width: 40.830px; flex: none; display: flex; align-items: center; justify-content: center; position: relative; }
.tk-first { width: 42px; }
.tk-open::after { content: ""; position: absolute; left: 3px; right: 3px; bottom: 0; height: 2px; background: #76b9ed; }
.tk-active { background: #3a3532; }
.tk-active::after { left: 0; right: 0; }
.app-letter { font: bold 9px "Liberation Sans", sans-serif; fill: #fff; text-anchor: middle; }
.skype-letter { font: bold 12px "Liberation Sans", sans-serif; fill: #fff; text-anchor: middle; }
.tray { margin-left: auto; display: flex; align-items: center; gap: 7px; padding-right: 20px; }
.clock { display: flex; flex-direction: column; align-items: center; gap: 3px; width: 48px; margin-left: -1px; margin-right: 5px; font-family: "Open Sans", sans-serif; font-size: 9.800px; line-height: 12px; color: #eee; }
```
